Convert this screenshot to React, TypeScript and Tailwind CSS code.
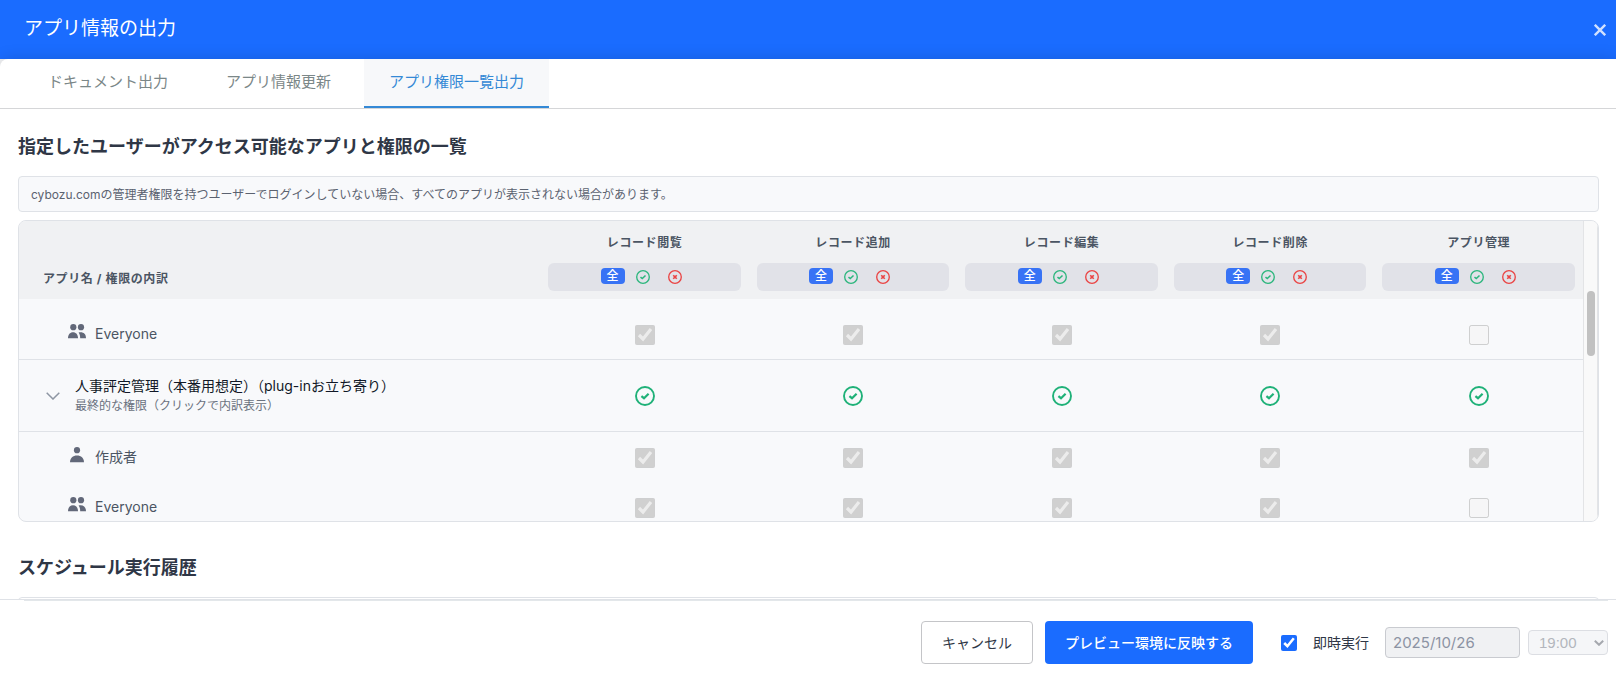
import { useState } from "react";

const TABS = ["ドキュメント出力", "アプリ情報更新", "アプリ権限一覧出力"];

const PERMISSIONS = ["レコード閲覧", "レコード追加", "レコード編集", "レコード削除", "アプリ管理"];

function CheckCircle({ className }: { className: string }) {
  return (
    <svg viewBox="0 0 20 20" fill="none" stroke="currentColor" className={className}>
      <circle cx="10" cy="10" r="9" strokeWidth="1.9" />
      <path d="M6.4 10.1 9 12.2 13.6 7.8" strokeWidth="2.2" />
    </svg>
  );
}

function CrossCircle({ className }: { className: string }) {
  return (
    <svg viewBox="0 0 20 20" fill="none" stroke="currentColor" className={className}>
      <circle cx="10" cy="10" r="9" strokeWidth="1.9" />
      <path d="m7.5 7.5 5 5m0-5-5 5" strokeWidth="2.4" />
    </svg>
  );
}

function UserIcon() {
  return (
    <svg viewBox="0 0 18 16" fill="currentColor" className="h-4 w-[18px]">
      <circle cx="9" cy="3.2" r="3.1" />
      <path d="M2 15.2c0-4.2 3-6.8 7-6.8s7 2.6 7 6.8z" />
    </svg>
  );
}

function UsersIcon() {
  return (
    <svg viewBox="0 0 18 16" fill="currentColor" className="h-4 w-[18px]">
      <circle cx="5.3" cy="3.2" r="3.1" />
      <circle cx="13" cy="3.2" r="3.1" />
      <path d="M0 14.2C0 10.4 2 8.2 5 8.2s5 2.2 5 6z" />
      <path d="M10.6 8.5c4.2-1 7.4 1 7.4 5.7h-5.8c0-2.400-.5-4.300-1.600-5.700z" />
    </svg>
  );
}

function PermissionFilter({ label }: { label: string }) {
  return (
    <div className="flex h-7 items-center justify-center gap-1.5 rounded-md bg-[#e1e2e8]">
      <button
        type="button"
        aria-label={`${label} すべて`}
        className="mb-0.5 h-4 w-6 rounded bg-[#3873f5] text-xs leading-4 font-medium tracking-normal text-white"
      >
        全
      </button>
      <button type="button" aria-label={`${label} 許可`} className="flex w-6 justify-center text-[#2cb67d]">
        <CheckCircle className="size-3.5" />
      </button>
      <button type="button" aria-label={`${label} 拒否`} className="flex w-7 justify-center text-[#ea4444]">
        <CrossCircle className="size-3.5" />
      </button>
    </div>
  );
}

type MemberRowProps = {
  name: string;
  group?: boolean;
  granted: boolean[];
  className: string;
};

function MemberRow({ name, group, granted, className }: MemberRowProps) {
  return (
    <tr className={className}>
      <td className="pl-[49px]">
        <div className="flex items-center gap-[9px] text-[#4b5563]">
          <span className="mb-1 text-[#626879]">{group ? <UsersIcon /> : <UserIcon />}</span>
          <span className="text-sm">{name}</span>
        </div>
      </td>
      {granted.map((on, i) => (
        <td key={PERMISSIONS[i]} className="pt-0.5">
          <input
            type="checkbox"
            checked={on}
            disabled
            readOnly
            aria-label={`${name} ${PERMISSIONS[i]}`}
            className="mx-auto block size-5"
          />
        </td>
      ))}
    </tr>
  );
}

function PermissionTable() {
  return (
    <div className="mt-2 flex h-[302px] overflow-hidden rounded-lg border border-[#dfe2e7] bg-[#f8f9fb]">
      <div className="min-w-0 flex-1 overflow-hidden">
        <table className="w-full table-fixed border-collapse">
          <thead className="bg-[#f0f1f3] text-xs tracking-wider text-[#4b5563]">
            <tr className="h-[78px]">
              <th className="w-1/3 pb-3 pl-6 text-left align-bottom font-bold">アプリ名 / 権限の内訳</th>
              {PERMISSIONS.map((label) => (
                <th key={label} className="px-2 pb-2 align-bottom font-bold">
                  <div className="mb-3">{label}</div>
                  <PermissionFilter label={label} />
                </th>
              ))}
            </tr>
          </thead>
          <tbody>
            <tr className="h-2.5" aria-hidden="true">
              <td colSpan={6} />
            </tr>
            <MemberRow
              name="Everyone"
              group
              granted={[true, true, true, true, false]}
              className="h-[50px] border-b border-[#dfe2e7]"
            />
            <tr className="h-[72px] border-b border-[#dfe2e7]">
              <td className="pt-0.5 pl-[27px]">
                <div className="flex items-center gap-[15px]">
                  <svg viewBox="0 0 14 8" fill="none" stroke="#8e96a3" strokeWidth="1.5" className="h-2 w-3.5">
                    <path d="m.7.700 6.300 6.300 6.300-6.300" />
                  </svg>
                  <div>
                    <div className="text-sm text-[#111827]">人事評定管理（本番用想定）（plug-inお立ち寄り）</div>
                    <div className="text-xs leading-5 text-[#6b7280]">最終的な権限（クリックで内訳表示）</div>
                  </div>
                </div>
              </td>
              {PERMISSIONS.map((label) => (
                <td key={label} className="pt-0.5">
                  <CheckCircle className="mx-auto block size-5 text-[#1fb178]" />
                </td>
              ))}
            </tr>
            <MemberRow name="作成者" granted={[true, true, true, true, true]} className="h-[51px]" />
            <MemberRow name="Everyone" group granted={[true, true, true, true, false]} className="h-[50px]" />
          </tbody>
        </table>
      </div>
      {/* Scroll track */}
      <div className="w-[15px] border-x border-[#e3e4e6] bg-[#f9f9f9] px-[3px] pt-[70px]">
        <div className="h-[65px] w-2 rounded-full bg-[#c1c1c1]" />
      </div>
    </div>
  );
}

export default function App() {
  const [tab, setTab] = useState(2);

  return (
    <div className="flex h-screen flex-col overflow-hidden bg-[#f0f1f3] font-[Inter,'Noto_Sans_CJK_JP',sans-serif]">
      <header className="flex h-[59px] shrink-0 items-center justify-between bg-[#1a6cff] pr-2.5 pl-6 text-white">
        <h1 className="text-[19px]">アプリ情報の出力</h1>
        <button type="button" aria-label="閉じる" className="pt-px opacity-80">
          <svg viewBox="0 0 12 12" fill="none" stroke="currentColor" strokeWidth="2.4" className="size-3">
            <path d="m.8.800 10.400 10.400M11.200.800.800 11.200" />
          </svg>
        </button>
      </header>

      <div className="flex min-h-0 flex-1 flex-col rounded-tl-lg bg-white shadow-[0_0_16px_rgba(0,0,0,0.15)]">
        <nav className="flex h-[50px] shrink-0 gap-2 border-b border-[#d5d6d8] pl-[23px]">
          {TABS.map((label, i) => (
            <button
              key={label}
              type="button"
              onClick={() => setTab(i)}
              className={
                i === tab
                  ? "border-b-2 border-[#3489d6] bg-[#f7f8fa] px-[25px] text-[15px] text-[#3489d6]"
                  : "border-b-2 border-transparent px-[25px] text-[15px] text-[#7b8788]"
              }
            >
              {label}
            </button>
          ))}
        </nav>

        <main className="min-h-0 flex-1 overflow-hidden pt-6 pr-[17px] pl-[18px]">
          <h2 className="mb-[15px] text-lg leading-7 font-bold text-[#2f3746]">
            指定したユーザーがアクセス可能なアプリと権限の一覧
          </h2>
          <p className="flex h-9 items-center rounded border border-[#dfe2e7] bg-[#f8f9fb] px-3 pt-0.5 text-xs text-[#5b6270]">
            cybozu.comの管理者権限を持つユーザーでログインしていない場合、すべてのアプリが表示されない場合があります。
          </p>
          <PermissionTable />
          <h2 className="mt-8 mb-[15px] text-lg leading-7 font-bold text-[#2f3746]">スケジュール実行履歴</h2>
          <div className="h-24 rounded border border-[#dfe2e7]" />
        </main>

        <footer className="h-[92px] shrink-0 border-t border-[#dfe2e7] pr-2 pl-6">
          <div className="flex h-[84px] items-center justify-end border-t border-[#e3e7ea] text-sm">
            <button
              type="button"
              className="mr-3 h-[43px] rounded border border-[#c4c5c8] bg-white px-5 text-[#2f3746]"
            >
              キャンセル
            </button>
            <button type="button" className="mr-7 h-[43px] rounded bg-[#1a6cff] px-5 font-medium text-white">
              プレビュー環境に反映する
            </button>
            <input id="run-now" type="checkbox" defaultChecked className="mr-4 size-4 accent-[#1a6cff]" />
            <label htmlFor="run-now" className="mr-4 text-[#2f3746]">
              即時実行
            </label>
            <input
              type="text"
              aria-label="実行日"
              value="2025/10/26"
              disabled
              readOnly
              className="mr-2 h-[31px] w-[135px] rounded border border-[#c9cbd0] bg-[#f0f1f3] px-[7px] text-[15px] text-[#8c93a3]"
            />
            <div className="relative">
              <select
                aria-label="実行時刻"
                disabled
                className="block h-[25px] w-20 appearance-none rounded border border-[#dcdee3] bg-[#f5f6f8] pl-2.5 font-['Liberation_Sans'] text-[15px] leading-5 text-[#b3b6bd]"
              >
                <option>19:00</option>
              </select>
              <svg
                viewBox="0 0 10 6"
                fill="none"
                stroke="#a5a8ae"
                strokeWidth="2"
                className="pointer-events-none absolute top-2.5 right-1 h-1.5 w-2.5"
              >
                <path d="m.8.800 4.200 4 4.200-4" />
              </svg>
            </div>
          </div>
        </footer>
      </div>
    </div>
  );
}
